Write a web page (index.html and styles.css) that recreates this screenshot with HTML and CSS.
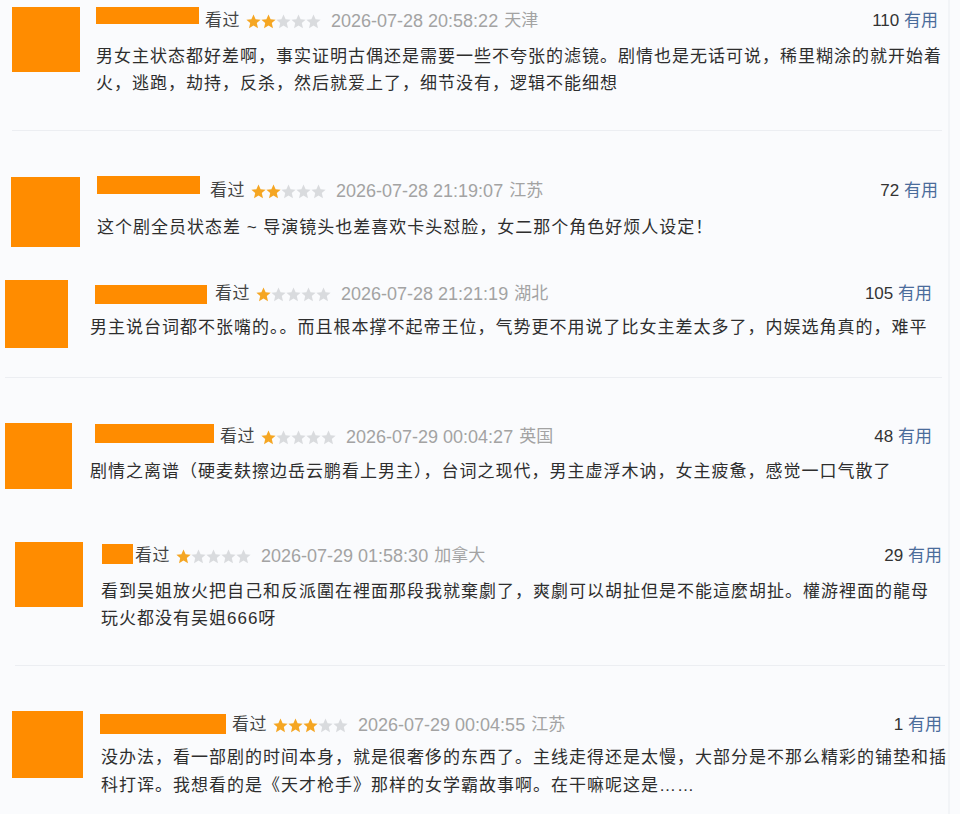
FILE: index.html
```html
<!DOCTYPE html>
<html lang="zh-CN">
<head>
  <meta charset="UTF-8">
  <meta name="viewport" content="width=device-width, initial-scale=1.0">
  <title>短评</title>
  <link rel="stylesheet" href="styles.css">
</head>
<body>
  <svg class="defs" width="0" height="0">
    <symbol id="star" viewBox="0 0 15 15">
      <polygon points="7.5,0.6 9.6,5.3 14.6,5.7 10.8,9 12,14.2 7.5,11.4 3,14.2 4.2,9 0.4,5.7 5.4,5.3"/>
    </symbol>
  </svg>
  <main class="list">
    <div class="comment c1">
      <div class="avatar"></div>
      <div class="body">
        <div class="meta">
          <span class="name"></span>
          <span class="watched">看过</span>
          <span class="stars">
            <svg class="on"><use href="#star"/></svg><svg class="on"><use href="#star"/></svg><svg><use href="#star"/></svg><svg><use href="#star"/></svg><svg><use href="#star"/></svg>
          </span>
          <span class="time">2026-07-28 20:58:22</span>
          <span class="loc">天津</span>
          <span class="votes">110 <em>有用</em></span>
        </div>
        <p class="text">男女主状态都好差啊，事实证明古偶还是需要一些不夸张的滤镜。剧情也是无话可说，稀里糊涂的就开始着<br>火，逃跑，劫持，反杀，然后就爱上了，细节没有，逻辑不能细想</p>
      </div>
    </div>
    <hr class="rule r1">

    <div class="comment c2">
      <div class="avatar"></div>
      <div class="body">
        <div class="meta">
          <span class="name"></span>
          <span class="watched">看过</span>
          <span class="stars">
            <svg class="on"><use href="#star"/></svg><svg class="on"><use href="#star"/></svg><svg><use href="#star"/></svg><svg><use href="#star"/></svg><svg><use href="#star"/></svg>
          </span>
          <span class="time">2026-07-28 21:19:07</span>
          <span class="loc">江苏</span>
          <span class="votes">72 <em>有用</em></span>
        </div>
        <p class="text">这个剧全员状态差 ~ 导演镜头也差喜欢卡头怼脸，女二那个角色好烦人设定！</p>
      </div>
    </div>

    <div class="comment c3">
      <div class="avatar"></div>
      <div class="body">
        <div class="meta">
          <span class="name"></span>
          <span class="watched">看过</span>
          <span class="stars">
            <svg class="on"><use href="#star"/></svg><svg><use href="#star"/></svg><svg><use href="#star"/></svg><svg><use href="#star"/></svg><svg><use href="#star"/></svg>
          </span>
          <span class="time">2026-07-28 21:21:19</span>
          <span class="loc">湖北</span>
          <span class="votes">105 <em>有用</em></span>
        </div>
        <p class="text">男主说台词都不张嘴的。。而且根本撑不起帝王位，气势更不用说了比女主差太多了，内娱选角真的，难平</p>
      </div>
    </div>
    <hr class="rule r2">

    <div class="comment c4">
      <div class="avatar"></div>
      <div class="body">
        <div class="meta">
          <span class="name"></span>
          <span class="watched">看过</span>
          <span class="stars">
            <svg class="on"><use href="#star"/></svg><svg><use href="#star"/></svg><svg><use href="#star"/></svg><svg><use href="#star"/></svg><svg><use href="#star"/></svg>
          </span>
          <span class="time">2026-07-29 00:04:27</span>
          <span class="loc">英国</span>
          <span class="votes">48 <em>有用</em></span>
        </div>
        <p class="text">剧情之离谱（硬麦麸擦边岳云鹏看上男主），台词之现代，男主虚浮木讷，女主疲惫，感觉一口气散了</p>
      </div>
    </div>

    <div class="comment c5">
      <div class="avatar"></div>
      <div class="body">
        <div class="meta">
          <span class="name"></span>
          <span class="watched">看过</span>
          <span class="stars">
            <svg class="on"><use href="#star"/></svg><svg><use href="#star"/></svg><svg><use href="#star"/></svg><svg><use href="#star"/></svg><svg><use href="#star"/></svg>
          </span>
          <span class="time">2026-07-29 01:58:30</span>
          <span class="loc">加拿大</span>
          <span class="votes">29 <em>有用</em></span>
        </div>
        <p class="text">看到吴姐放火把自己和反派圍在裡面那段我就棄劇了，爽劇可以胡扯但是不能這麼胡扯。權游裡面的龍母<br>玩火都没有吴姐666呀</p>
      </div>
    </div>
    <hr class="rule r3">

    <div class="comment c6">
      <div class="avatar"></div>
      <div class="body">
        <div class="meta">
          <span class="name"></span>
          <span class="watched">看过</span>
          <span class="stars">
            <svg class="on"><use href="#star"/></svg><svg class="on"><use href="#star"/></svg><svg class="on"><use href="#star"/></svg><svg><use href="#star"/></svg><svg><use href="#star"/></svg>
          </span>
          <span class="time">2026-07-29 00:04:55</span>
          <span class="loc">江苏</span>
          <span class="votes">1 <em>有用</em></span>
        </div>
        <p class="text">没办法，看一部剧的时间本身，就是很奢侈的东西了。主线走得还是太慢，大部分是不那么精彩的铺垫和插<br>科打诨。我想看的是《天才枪手》那样的女学霸故事啊。在干嘛呢这是……</p>
      </div>
    </div>
  </main>
</body>
</html>
```

FILE: styles.css
```css
body {
  margin: 0;
  background-color: #fafbfd;
  font-family: "Liberation Sans", "Noto Sans CJK SC", sans-serif;
  color: #333;
}
.defs {
  position: absolute;
}
.list {
  width: 948px;
  height: 814px;
  overflow: hidden;
  border-right: 2px solid #f2f4f7;
}
.comment {
  display: flex;
  align-items: flex-start;
  box-sizing: border-box;
}
.avatar {
  flex: none;
  background-color: #ff8c00;
}
.body {
  flex: 1;
  min-width: 0;
  display: flex;
  flex-direction: column;
  padding-top: 2px;
}
.meta {
  display: flex;
  align-items: center;
  height: 24px;
  line-height: 24px;
  white-space: nowrap;
}
.name {
  align-self: flex-start;
  height: 19px;
  margin-right: 6px;
  background-color: #ff8c00;
}
.watched {
  font-size: 17px;
  letter-spacing: 0.5px;
  color: #444;
  margin-right: 6px;
}
.stars {
  display: flex;
  margin-right: 10px;
}
.stars svg {
  width: 15px;
  height: 15px;
  fill: #d9dbde;
}
.stars svg.on {
  fill: #f5a623;
}
.time {
  font-size: 18px;
  color: #a3a3a3;
  margin-right: 6px;
}
.loc {
  font-size: 17px;
  color: #a3a3a3;
}
.votes {
  margin-left: auto;
  font-size: 17px;
  color: #333;
}
.votes em {
  font-style: normal;
  color: #4a6c9b;
}
.text {
  margin: 11px 0 0;
  font-size: 17px;
  letter-spacing: 1px;
  line-height: 27px;
  white-space: nowrap;
  color: #2e2e2e;
}
.rule {
  border: 0;
  border-top: 1px solid #eceef2;
  margin: 0;
}

/* each card was cropped a bit differently */
.c1 { height: 130px; padding: 7px 10px 0 12px; }
.c1 .avatar { width: 68px; height: 65px; margin-right: 16px; }
.c1 .name { width: 103px; height: 17px; margin-top: -2px; }
.c1 .text { margin-top: 10px; }

.r1 { margin: 0 6px 0 12px; }

.c2 { height: 134px; padding: 46px 10px 0 11px; }
.c2 .avatar { width: 69px; height: 70px; margin-right: 17px; }
.c2 .name { width: 103px; height: 18px; margin-top: -3px; margin-right: 10px; }
.c2 .text { margin-top: 11px; }

.c3 { height: 112px; padding: 15px 16px 0 5px; }
.c3 .avatar { width: 63px; height: 68px; margin-right: 22px; }
.c3 .name { width: 112px; margin-top: 3px; margin-left: 5px; margin-right: 8px; }
.c3 .text { margin-top: 8px; }

.r2 { margin: 0 6px 0 5px; }

.c4 { height: 132px; padding: 45px 16px 0 5px; }
.c4 .avatar { width: 67px; height: 66px; margin-right: 18px; }
.c4 .name { width: 119px; margin-top: -1px; margin-left: 5px; }
.c4 .text { margin-top: 9px; }

.c5 { height: 155px; padding: 32px 6px 0 15px; }
.c5 .avatar { width: 68px; height: 65px; margin-right: 18px; }
.c5 .name { width: 31px; height: 20px; margin-top: 0; margin-left: 1px; margin-right: 2px; }
.c5 .text { margin-top: 10px; }

.r3 { margin: 0 3px 0 15px; }

.c6 { height: 148px; padding: 45px 6px 0 12px; }
.c6 .avatar { width: 71px; height: 67px; margin-right: 18px; }
.c6 .name { width: 126px; height: 20px; margin-top: 1px; margin-left: -1px; }
.c6 .text { margin-top: 7px; line-height: 28px; }
```
